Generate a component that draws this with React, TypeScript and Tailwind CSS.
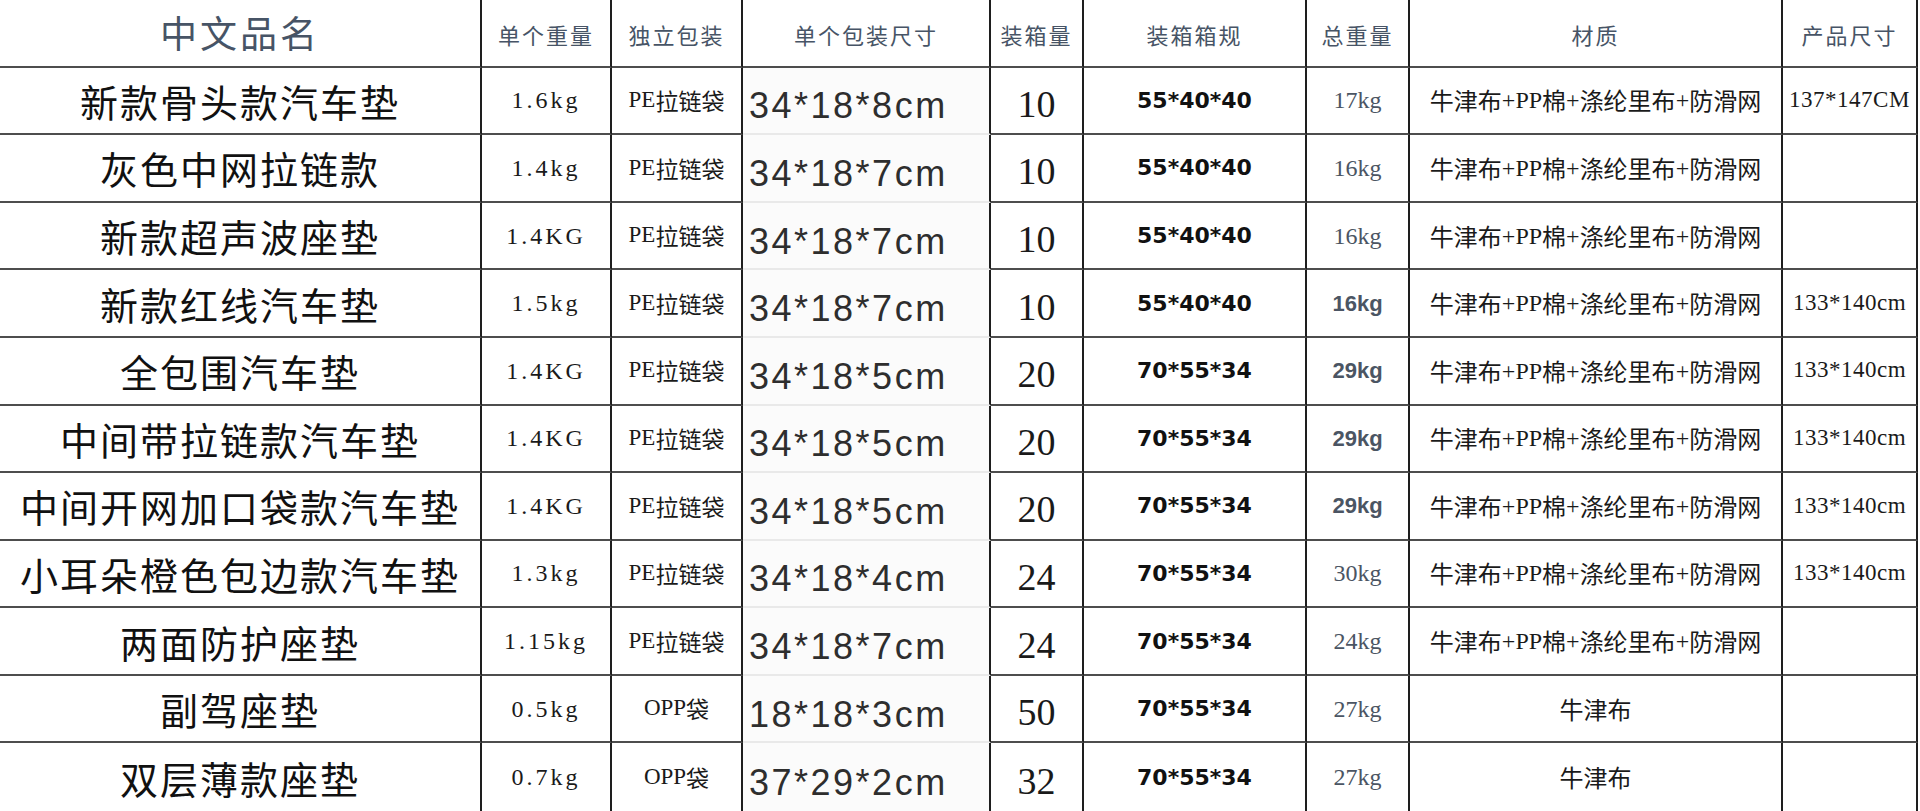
import React from "react";

type Row = {
  name: string;
  w: string;
  pack: string;
  size: string;
  qty: string;
  box: string;
  total: string;
  tb: boolean;
  mat: string;
  prod: string;
};

const MAT = "牛津布+PP棉+涤纶里布+防滑网";

const rows: Row[] = [
  { name: "新款骨头款汽车垫", w: "1.6kg", pack: "PE拉链袋", size: "34*18*8cm", qty: "10", box: "55*40*40", total: "17kg", tb: false, mat: MAT, prod: "137*147CM" },
  { name: "灰色中网拉链款", w: "1.4kg", pack: "PE拉链袋", size: "34*18*7cm", qty: "10", box: "55*40*40", total: "16kg", tb: false, mat: MAT, prod: "" },
  { name: "新款超声波座垫", w: "1.4KG", pack: "PE拉链袋", size: "34*18*7cm", qty: "10", box: "55*40*40", total: "16kg", tb: false, mat: MAT, prod: "" },
  { name: "新款红线汽车垫", w: "1.5kg", pack: "PE拉链袋", size: "34*18*7cm", qty: "10", box: "55*40*40", total: "16kg", tb: true, mat: MAT, prod: "133*140cm" },
  { name: "全包围汽车垫", w: "1.4KG", pack: "PE拉链袋", size: "34*18*5cm", qty: "20", box: "70*55*34", total: "29kg", tb: true, mat: MAT, prod: "133*140cm" },
  { name: "中间带拉链款汽车垫", w: "1.4KG", pack: "PE拉链袋", size: "34*18*5cm", qty: "20", box: "70*55*34", total: "29kg", tb: true, mat: MAT, prod: "133*140cm" },
  { name: "中间开网加口袋款汽车垫", w: "1.4KG", pack: "PE拉链袋", size: "34*18*5cm", qty: "20", box: "70*55*34", total: "29kg", tb: true, mat: MAT, prod: "133*140cm" },
  { name: "小耳朵橙色包边款汽车垫", w: "1.3kg", pack: "PE拉链袋", size: "34*18*4cm", qty: "24", box: "70*55*34", total: "30kg", tb: false, mat: MAT, prod: "133*140cm" },
  { name: "两面防护座垫", w: "1.15kg", pack: "PE拉链袋", size: "34*18*7cm", qty: "24", box: "70*55*34", total: "24kg", tb: false, mat: MAT, prod: "" },
  { name: "副驾座垫", w: "0.5kg", pack: "OPP袋", size: "18*18*3cm", qty: "50", box: "70*55*34", total: "27kg", tb: false, mat: "牛津布", prod: "" },
  { name: "双层薄款座垫", w: "0.7kg", pack: "OPP袋", size: "37*29*2cm", qty: "32", box: "70*55*34", total: "27kg", tb: false, mat: "牛津布", prod: "" },
];

const V = "border-r-2 border-r-[#1e1e1e]";
const H = "border-b-2 border-b-[#4d4d4d]";
const CELL = "flex items-center justify-center overflow-hidden whitespace-nowrap";
const SERIF = "font-['Liberation_Serif','Noto_Sans_CJK_SC',serif]";
const CJK = "font-['Noto_Sans_CJK_SC',sans-serif]";

function HeadCell({ children, big }: { children: React.ReactNode; big?: boolean }) {
  return (
    <div
      className={`${CELL} ${V} ${H} ${CJK} text-[#475466] ${
        big ? "text-[37px] tracking-[3px]" : "text-[22px] tracking-[2px] pt-1"
      }`}
    >
      {children}
    </div>
  );
}

export default function App() {
  return (
    <div className="w-[1920px] h-[811px] bg-white overflow-hidden">
      <div className="grid grid-cols-[482px_130px_131px_248px_93px_223px_103px_373px_135px] grid-rows-[repeat(12,minmax(0,1fr))] h-[811px]">
        <HeadCell big>中文品名</HeadCell>
        <HeadCell>单个重量</HeadCell>
        <HeadCell>独立包装</HeadCell>
        <HeadCell>单个包装尺寸</HeadCell>
        <HeadCell>装箱量</HeadCell>
        <HeadCell>装箱箱规</HeadCell>
        <HeadCell>总重量</HeadCell>
        <HeadCell>材质</HeadCell>
        <HeadCell>产品尺寸</HeadCell>
        {rows.map((r, i) => {
          const last = i === rows.length - 1;
          const hb = last ? "" : H;
          const hbLight = last ? "" : "border-b-2 border-b-[#e9e9e9]";
          return (
            <React.Fragment key={i}>
              <div className={`${CELL} ${V} ${hb} ${CJK} text-[38px] tracking-[2px] text-[#111]`}>
                {r.name}
              </div>
              <div className={`${CELL} ${V} ${hb} ${SERIF} text-[24px] tracking-[3px] text-[#1a1a1a]`}>
                {r.w}
              </div>
              <div className={`${CELL} ${V} ${hb} ${SERIF} text-[23px] text-[#1a1a1a]`}>
                <span className="font-['Liberation_Serif',serif]">{r.pack.replace(/[^A-Z]/g, "")}</span>
                <span className={`${CJK}`}>{r.pack.replace(/[A-Z]/g, "")}</span>
              </div>
              <div
                className={`flex items-center justify-start overflow-hidden whitespace-nowrap ${V} ${hbLight} bg-[#fbfbfb] pl-[6px] pt-3 font-['Liberation_Sans',sans-serif] text-[36px] tracking-[2.5px] text-[#2e2e2e]`}
              >
                {r.size}
              </div>
              <div className={`${CELL} ${V} ${hb} ${SERIF} text-[38px] text-[#1a1a1a] pt-2`}>
                {r.qty}
              </div>
              <div className={`${CELL} ${V} ${hb} font-['DejaVu_Sans',sans-serif] font-bold text-[22px] text-[#111]`}>
                {r.box}
              </div>
              <div
                className={`${CELL} ${V} ${hb} text-[#4b5563] ${
                  r.tb
                    ? "font-['Liberation_Sans',sans-serif] font-bold text-[22px]"
                    : `${SERIF} text-[24px]`
                }`}
              >
                {r.total}
              </div>
              <div className={`${CELL} ${V} ${hb} text-[24px] text-[#1a1a1a]`}>
                {r.mat.split(/(P+|\+)/).map((p, k) =>
                  /^(P+|\+)$/.test(p) ? (
                    <span key={k} className="font-['Liberation_Serif',serif]">
                      {p}
                    </span>
                  ) : (
                    <span key={k} className={CJK}>
                      {p}
                    </span>
                  )
                )}
              </div>
              <div className={`${CELL} ${V} ${hb} ${SERIF} text-[23px] tracking-[0.5px] text-[#1a1a1a]`}>
                {r.prod}
              </div>
            </React.Fragment>
          );
        })}
      </div>
    </div>
  );
}
